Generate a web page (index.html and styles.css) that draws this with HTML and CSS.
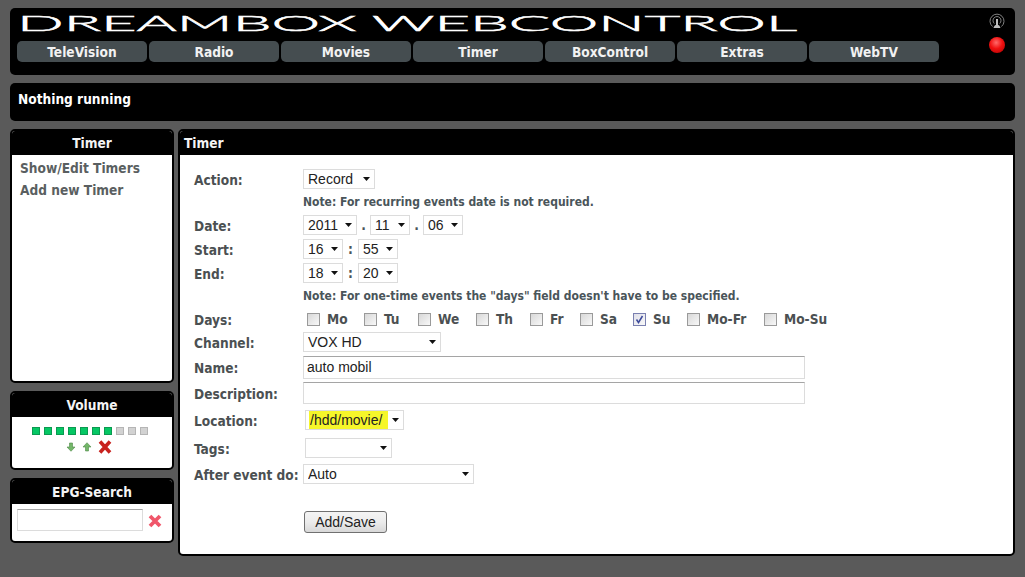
FILE: index.html
```html
<!DOCTYPE html>
<html lang="en">
<head>
<meta charset="utf-8">
<title>Dreambox WebControl</title>
<link rel="stylesheet" href="styles.css">
</head>
<body>
<header class="top box">
  <div class="top-main">
    <svg class="logo" viewBox="0 0 782 28" width="782" height="28" role="img" aria-label="dreambox webcontrol">
      <text x="0" y="22.500" textLength="780" lengthAdjust="spacingAndGlyphs">dreambox webcontrol</text>
    </svg>
    <nav class="nav">
      <a>TeleVision</a><a>Radio</a><a>Movies</a><a>Timer</a><a>BoxControl</a><a>Extras</a><a>WebTV</a>
    </nav>
  </div>
  <div class="top-icons">
    <svg class="antenna" viewBox="0 0 16 16" width="16" height="16">
      <path d="M3.500 13.500a7 7 0 1 1 9 0" />
      <path d="M5.300 10.500a4 4 0 1 1 5.400 0" />
      <path d="M7 6h2v6H7zM4.500 15c.6-2 1.500-3 2.300-3h2.400c.8 0 1.700 1 2.300 3z" class="mast"/>
    </svg>
    <span class="led"></span>
  </div>
</header>

<section class="status box">Nothing running</section>

<div class="columns">
  <aside class="side">
    <section class="panel panel-menu">
      <h2 class="panel-title center">Timer</h2>
      <ul class="menu">
        <li>Show/Edit Timers</li>
        <li>Add new Timer</li>
      </ul>
    </section>
    <section class="panel panel-volume">
      <h2 class="panel-title center">Volume</h2>
      <div class="vol-bars">
        <i class="on"></i><i class="on"></i><i class="on"></i><i class="on"></i><i class="on"></i><i class="on"></i><i class="on"></i><i></i><i></i><i></i>
      </div>
      <div class="vol-ctl">
        <svg viewBox="0 0 10 10" width="10" height="10"><path class="arrow" d="M3.500 1h3v4h2.500L5 9.300 1 5h2.500z"/></svg>
        <svg viewBox="0 0 10 10" width="10" height="10"><path class="arrow" d="M3.500 9h3V5h2.500L5 .7 1 5h2.500z"/></svg>
        <svg viewBox="0 0 14 14" width="14" height="14"><path class="mute" d="M2 1.500l10 11M12 1.500L2 12.500"/></svg>
      </div>
    </section>
    <section class="panel panel-epg">
      <h2 class="panel-title center">EPG-Search</h2>
      <div class="epg-row">
        <input class="field epg-input" type="text">
        <svg class="epg-clear" viewBox="0 0 14 14" width="14" height="14"><path class="clear" d="M2 2l10 10M12 2L2 12"/></svg>
      </div>
    </section>
  </aside>

  <main class="panel content">
    <h2 class="panel-title">Timer</h2>
    <form class="form">
      <label>Action:</label>
      <div><select class="w72"><option>Record</option></select></div>

      <span></span>
      <p class="note">Note: For recurring events date is not required.</p>

      <label>Date:</label>
      <div class="inline">
        <select class="w54"><option>2011</option></select><b class="dot">.</b><select class="w40"><option>11</option></select><b class="dot">.</b><select class="w40"><option>06</option></select>
      </div>

      <label>Start:</label>
      <div class="inline"><select class="w40"><option>16</option></select><b>:</b><select class="w40"><option>55</option></select></div>

      <label>End:</label>
      <div class="inline"><select class="w40"><option>18</option></select><b>:</b><select class="w40"><option>20</option></select></div>

      <span></span>
      <p class="note">Note: For one-time events the "days" field doesn't have to be specified.</p>

      <label>Days:</label>
      <div class="days">
        <label class="day d-mo"><input type="checkbox">Mo</label>
        <label class="day d-tu"><input type="checkbox">Tu</label>
        <label class="day d-we"><input type="checkbox">We</label>
        <label class="day d-th"><input type="checkbox">Th</label>
        <label class="day d-fr"><input type="checkbox">Fr</label>
        <label class="day d-sa"><input type="checkbox">Sa</label>
        <label class="day d-su"><input type="checkbox" checked>Su</label>
        <label class="day d-mf"><input type="checkbox">Mo-Fr</label>
        <label class="day"><input type="checkbox">Mo-Su</label>
      </div>

      <label>Channel:</label>
      <div><select class="w138"><option>VOX HD</option></select></div>

      <label>Name:</label>
      <div><input class="field wide" type="text" value="auto mobil"></div>

      <label>Description:</label>
      <div><input class="field wide short" type="text"></div>

      <label>Location:</label>
      <div class="indent"><select class="w99 marked"><option>/hdd/movie/</option></select></div>

      <label>Tags:</label>
      <div class="indent"><select class="w87"><option></option></select></div>

      <label>After event do:</label>
      <div><select class="w171"><option>Auto</option></select></div>

      <span class="spacer"></span>
      <span class="spacer"></span>

      <span></span>
      <div class="indent-btn"><button type="button" class="save">Add/Save</button></div>
    </form>
  </main>
</div>
</body>
</html>
```

FILE: styles.css
```css
* { box-sizing: border-box; }
html, body { margin: 0; height: 100%; overflow: hidden; }
body {
  background: #5a5a5a;
  padding: 8px 10px 0;
  font-family: "DejaVu Sans Condensed", "DejaVu Sans", sans-serif;
  font-stretch: condensed;
  font-size: 13.600px;
  font-weight: bold;
  color: #4b5052;
  display: flex;
  flex-direction: column;
  gap: 8px;
}
.box { background: #000; border-radius: 5px; color: #fff; }

.top { height: 67px; display: flex; justify-content: space-between; padding: 0 7px; }
.logo { display: block; }
.logo text {
  font-family: Lato, sans-serif;
  font-size: 22px;
  font-weight: 300;
  fill: #fff;
  stroke: #fff;
  stroke-width: .5px;
  text-transform: uppercase;
}
.nav { display: flex; gap: 2px; margin-top: 5px; }
.nav a {
  width: 130px;
  height: 21px;
  line-height: 22px;
  background: #454d50;
  border-radius: 5px;
  color: #f2f2f2;
  text-align: center;
}
.top-icons { display: flex; flex-direction: column; align-items: center; gap: 8px; width: 20px; margin: 5px 1px 0 0; }
.antenna path { fill: none; stroke: #8f8f8f; stroke-width: .9; }
.antenna .mast { fill: #bdbdbd; stroke: none; }
.led {
  width: 16px;
  height: 16px;
  border-radius: 50%;
  background: radial-gradient(circle at 45% 35%, #ff6a6a 0, #f01010 45%, #a80000 100%);
}

.status { height: 38px; padding: 8px 8px; }

.columns { display: flex; gap: 4px; }
.side { width: 164px; display: flex; flex-direction: column; gap: 8px; }

.panel { background: #fff; border: 2px solid #000; border-radius: 5px; overflow: hidden; }
.panel-title {
  margin: 0;
  height: 24px;
  line-height: 25px;
  background: #000;
  color: #f4f4f4;
  font-size: 13.600px;
  padding-left: 4px;
}
.panel-title.center { text-align: center; padding: 0; }
.panel-menu { height: 254px; }
.panel-volume { height: 79px; }
.panel-epg { height: 65px; }
.menu { list-style: none; margin: 0; padding: 2px 0 0 8px; line-height: 22px; color: #5a5f61; }

.vol-bars { display: flex; justify-content: center; gap: 4px; margin: 10px 4px 0 0; }
.vol-bars i { width: 8px; height: 8px; background: #d2d2d2; border: 1px solid #b5b5b5; }
.vol-bars i.on { background: #05c764; border-color: #0a9a50; }
.vol-ctl { display: flex; justify-content: center; align-items: center; gap: 6px; margin: 5px 7px 0 0; }
.arrow { fill: #74b76a; stroke: #4f8a48; stroke-width: .6; }
.mute { stroke: #c8221e; stroke-width: 3.600; fill: none; }
.clear { stroke: #f0566a; stroke-width: 3.800; fill: none; }
.epg-row { display: flex; align-items: center; gap: 5px; padding: 5px 0 0 5px; }
.epg-input { width: 126px; height: 22px; }
.epg-clear { margin-top: 1px; }

.content { flex: 1; height: 427px; }
.form {
  display: grid;
  grid-template-columns: 109px 1fr;
  grid-template-rows: 24px 22px 24px 24px 24px 22px 24px 22px 29px 22px 32px 24px 28px 23px 22px;
  align-items: center;
  padding: 12px 0 0 14px;
}
.form label { display: block; white-space: nowrap; padding-top: 1px; }
.form > div, .form p { margin: 0; }
.note { font-size: 12px; color: #4a555a; }

select, .field, .save { font-family: "Liberation Sans", sans-serif; font-stretch: normal; font-size: 14px; font-weight: normal; color: #222; }
select {
  appearance: none;
  display: block;
  height: 20px;
  padding: 0 0 0 4px;
  border: 1px solid #dcdcdc;
  border-radius: 0;
  background: #fff url("data:image/svg+xml,%3Csvg xmlns='http://www.w3.org/2000/svg' width='7' height='4'%3E%3Cpath d='M0 0h7L3.500 4z' fill='%23111'/%3E%3C/svg%3E") no-repeat right 4px center;
}
.w40 { width: 40px; }
.w54 { width: 54px; }
.w72 { width: 72px; }
.w87 { width: 87px; }
.w99 { width: 99px; }
.w138 { width: 138px; }
.w171 { width: 171px; }
.marked {
  background-image:
    url("data:image/svg+xml,%3Csvg xmlns='http://www.w3.org/2000/svg' width='7' height='4'%3E%3Cpath d='M0 0h7L3.500 4z' fill='%23111'/%3E%3C/svg%3E"),
    linear-gradient(#f6f62a, #f6f62a);
  background-repeat: no-repeat;
  background-position: right 4px center, 3px 0;
  background-size: 7px 4px, 79px 18px;
}
.inline { display: flex; align-items: center; }
.inline b { width: 15px; text-align: center; color: #4a555a; }
.inline b.dot { width: 13px; }
.indent { padding-left: 2px; }
.indent-btn { padding-left: 1px; }

.days { display: flex; }
.form .day { display: flex; align-items: center; gap: 7px; padding-top: 0; }
.day input {
  appearance: none;
  width: 13px;
  height: 13px;
  margin: 0 0 0 4px;
  border: 1px solid #9a9a9a;
  background: linear-gradient(135deg, #d8d8d8, #f8f8f8);
}
.day input:checked {
  border-color: #7a80b0;
  background: url("data:image/svg+xml,%3Csvg xmlns='http://www.w3.org/2000/svg' width='11' height='11'%3E%3Cpath d='M2.500 5.500l2 3 4-6.500' fill='none' stroke='%233c4a9a' stroke-width='1.500'/%3E%3C/svg%3E") center no-repeat, linear-gradient(135deg, #e0e0ea, #f8f8f8);
}
.d-mo { width: 57px; }
.d-tu { width: 54px; }
.d-we { width: 58px; }
.d-th { width: 54px; }
.d-fr { width: 50px; }
.d-sa { width: 53px; }
.d-su { width: 54px; }
.d-mf { width: 77px; }

.field {
  display: block;
  border: 1px solid #dcdcdc;
  border-top-color: #a5a5a5;
  padding: 0 3px 1px;
  background: #fff;
  outline: none;
}
.wide { width: 502px; height: 23px; }
.short { height: 22px; }

.save {
  width: 83px;
  height: 22px;
  padding: 0;
  border: 1px solid #707070;
  border-radius: 3px;
  background: linear-gradient(#f4f4f4 0, #ececec 50%, #d8d8d8 100%);
  color: #222;
}
```
